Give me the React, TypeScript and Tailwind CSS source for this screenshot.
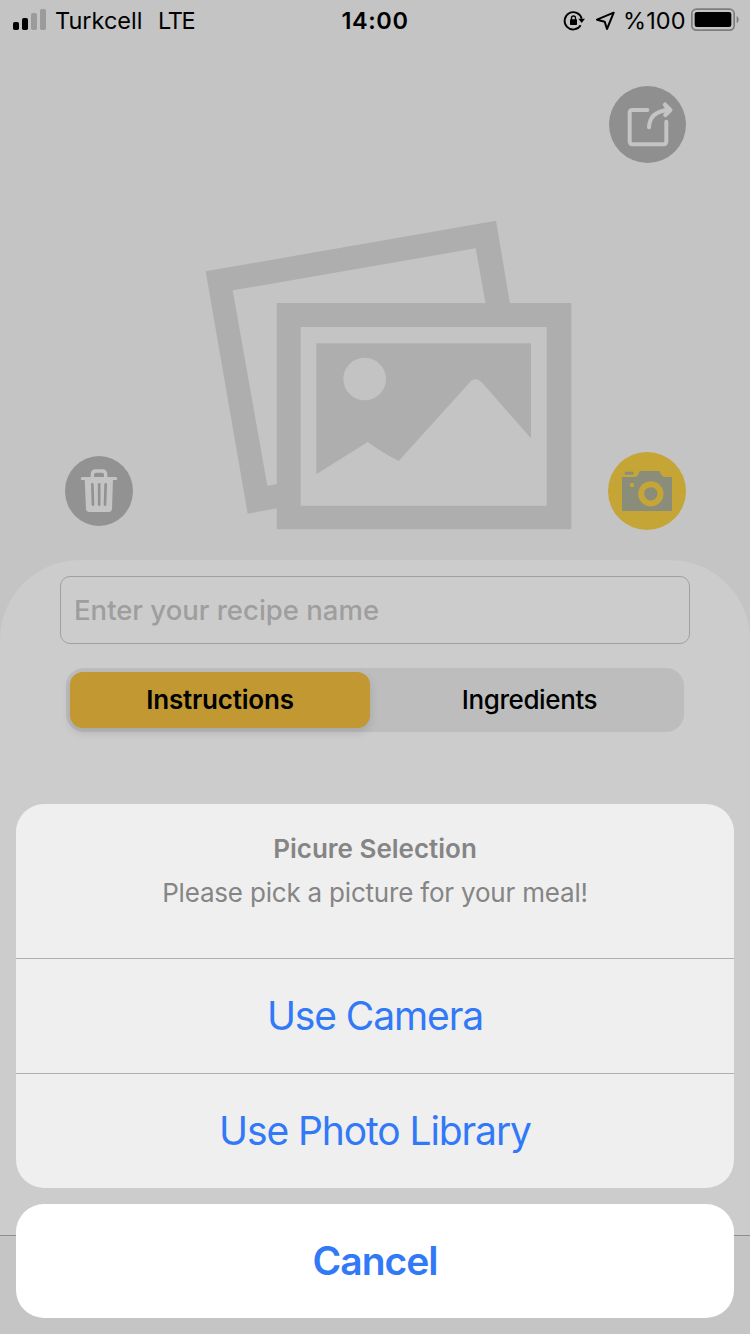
import type { ReactNode } from "react";

function SignalBars() {
  return (
    <svg className="mt-[9px] h-[21px] w-[33px]" viewBox="39 27 99 63">
      <rect x="39" y="66" width="18" height="24" rx="5" fill="#000" />
      <rect x="66" y="54" width="18" height="36" rx="5" fill="#000" />
      <rect x="93" y="39" width="18" height="51" rx="5" fill="#9b9b9b" />
      <rect x="120" y="27" width="18" height="63" rx="5" fill="#9b9b9b" />
    </svg>
  );
}

function RotationLock() {
  return (
    <svg className="mt-[10px] h-[21px] w-[22px]" viewBox="69 30 66 63">
      <path d="M122 76 A26 26 0 1 1 125 56" fill="none" stroke="#000" strokeWidth="5.500" />
      <path d="M115 56 H135 L125 69 Z" fill="#000" />
      <rect x="90" y="58" width="21" height="17" rx="2" fill="#000" />
      <path d="M94.500 60 V54 Q94.500 48 100.500 48 Q106.500 48 106.500 54 V60" fill="none" stroke="#000" strokeWidth="4" />
    </svg>
  );
}

function LocationArrow() {
  return (
    <svg className="mt-[11px] ml-[11px] h-[20px] w-[19px]" viewBox="168 33 57 60">
      <path
        d="M221 38 L171 59 L194 65 L201 87 Z"
        fill="none"
        stroke="#000"
        strokeWidth="6"
        strokeLinejoin="round"
      />
    </svg>
  );
}

function Battery() {
  return (
    <svg className="mt-[8px] ml-[6px] h-[23px] w-[48px]" viewBox="453 24 144 69">
      <rect x="455.500" y="27.500" width="127" height="63" rx="14" fill="none" stroke="#7d7d7d" strokeWidth="5" />
      <rect x="464" y="36" width="110" height="45" rx="7" fill="#000" />
      <path d="M590 47 Q596 51 596 58.500 Q596 66 590 70 Z" fill="#7d7d7d" />
    </svg>
  );
}

function StatusBar() {
  return (
    <header className="grid h-10 grid-cols-3 text-[23.5px] leading-[41px] text-black">
      <div className="flex pl-[13px]">
        <SignalBars />
        <span className="ml-[9px] w-[86px] tracking-[0px] whitespace-nowrap">Turkcell</span>
        <span className="ml-[17px] tracking-[-1.4px]">LTE</span>
      </div>
      <div className="text-center font-semibold tracking-[0.6px]">14:00</div>
      <div className="flex justify-end pr-[11px]">
        <RotationLock />
        <LocationArrow />
        <span className="ml-[8px] w-[62px] tracking-[0.1px] whitespace-nowrap">%100</span>
        <Battery />
      </div>
    </header>
  );
}

function PhotosPlaceholder() {
  return (
    <svg
      className="col-start-1 row-start-1 mt-[170px] ml-[190px] h-[340px] w-[400px]"
      viewBox="0 0 1200 1020"
      fill="#aeaeae"
    >
      <path d="M47 184 L918 32 L960 282 H887 L857 115 L128 241 L232 827 L262 822 V895 L173 911 Z" />
      <path fillRule="evenodd" d="M260 279 H1144 V958 H260 Z M332 351 V887 H1070 V351 Z" />
      <path d="M379 400 H1023 V685 L878 520 Q855 496 837 520 L626 753 Q580 730 533 696 L379 793 Z" />
      <circle cx="524" cy="507" r="64" fill="#c3c3c3" />
    </svg>
  );
}

function ShareIcon() {
  return (
    <svg className="h-[77px] w-[77px]" viewBox="27 33 231 231">
      <circle cx="142.500" cy="148.500" r="115.500" fill="#8f8f8f" />
      <g fill="none" stroke="#c4c4c4" strokeWidth="12" strokeLinecap="round" strokeLinejoin="round">
        <path d="M142 105 H98 Q89 105 89 114 V199 Q89 208 98 208 H190 Q199 208 199 199 V140" />
        <path d="M147 157 Q149 109 206 105" />
        <path d="M195 89 L211 105 L196 120" strokeWidth="13" />
      </g>
      <path d="M193 88 L214 105 L195 122 Z" fill="#c4c4c4" />
    </svg>
  );
}

function TrashIcon() {
  return (
    <svg className="h-[70px] w-[68px]" viewBox="45 48 204 210">
      <ellipse cx="147" cy="153" rx="102" ry="105" fill="#929292" />
      <path d="M104 116 H189 L186 207 Q185 216 176 216 H118 Q109 216 108 207 Z" fill="#c4c4c4" />
      <path d="M97 115.500 H197" stroke="#c4c4c4" strokeWidth="9" strokeLinecap="round" />
      <path
        d="M127 113 V104 Q127 93 138 93 H156 Q167 93 167 104 V113"
        fill="none"
        stroke="#c4c4c4"
        strokeWidth="10"
      />
      <g stroke="#929292" strokeWidth="8" strokeLinecap="round">
        <path d="M127 133 L129 194" />
        <path d="M147.500 133 V194" />
        <path d="M167 133 L165 194" />
      </g>
    </svg>
  );
}

function CameraIcon() {
  return (
    <svg className="h-[78px] w-[78px]" viewBox="39 36 234 234">
      <circle cx="156" cy="153" r="117" fill="#c5a535" />
      <path d="M81 111 H121 Q130 108 134 93 H193 Q199 108 207 111 H231 V213 H81 Z" fill="#8b8d7b" />
      <rect x="89" y="95" width="27" height="9" rx="4" fill="#8b8d7b" />
      <rect x="105" y="129" width="12" height="12" rx="2" fill="#c5a535" />
      <circle cx="167.500" cy="161.500" r="29" fill="none" stroke="#c5a535" strokeWidth="18" />
    </svg>
  );
}

function Hero() {
  return (
    <section className="grid h-[520px] grid-cols-1 grid-rows-1">
      <PhotosPlaceholder />
      <div className="col-start-1 row-start-1 flex flex-col justify-between pt-[46px] pr-16 pb-[30px] pl-[65px]">
        <button aria-label="Share" className="self-end">
          <ShareIcon />
        </button>
        <div className="flex items-center justify-between">
          <button aria-label="Delete">
            <TrashIcon />
          </button>
          <button aria-label="Choose picture">
            <CameraIcon />
          </button>
        </div>
      </div>
    </section>
  );
}

function RecipeForm() {
  return (
    <section className="h-[675px] rounded-t-[80px] bg-[#cccccc] pt-4">
      <div className="ml-[60px] flex h-[68px] w-[630px] items-center rounded-[10px] border border-[#a0a0a0] pl-[13px] text-[27.5px] leading-[42px] font-medium text-[#9e9e9e]">
        <span className="tracking-[0px]">Enter your recipe name</span>
      </div>
      <div className="mt-6 ml-[66px] flex h-16 w-[618px] rounded-[18px] bg-[#bdbdbd] p-1 text-[26px] leading-[55px] text-black">
        <div className="w-[300px] rounded-[13px] bg-[#c19832] text-center font-semibold tracking-[-0.2px] shadow-[0_4px_10px_rgba(0,0,0,0.13)]">
          Instructions
        </div>
        <div className="flex-1 pl-[9px] text-center font-medium tracking-[-0.4px]">Ingredients</div>
      </div>
    </section>
  );
}

function SheetAction({ children }: { children: ReactNode }) {
  return (
    <button className="block h-[115px] w-full border-t border-[#aeaeae] pb-px text-center text-[39px] leading-[47px] tracking-[-1.1px] text-[#3279f7]">
      {children}
    </button>
  );
}

function ActionSheet() {
  return (
    <div className="absolute inset-x-4 bottom-4 flex flex-col gap-4">
      <div className="overflow-hidden rounded-[28px] bg-[#efefef]">
        <div className="h-[154px] pt-[27px] text-center text-[26px] leading-[35px] text-[#858585]">
          <h2 className="font-semibold">Picure Selection</h2>
          <p className="mt-[9px] tracking-[-0.2px]">Please pick a picture for your meal!</p>
        </div>
        <SheetAction>Use Camera</SheetAction>
        <SheetAction>Use Photo Library</SheetAction>
      </div>
      <button className="h-[114px] rounded-[28px] bg-white pb-px text-center text-[39px] leading-[47px] font-semibold tracking-[-1px] text-[#3279f7]">
        Cancel
      </button>
    </div>
  );
}

export default function App() {
  return (
    <div className="relative h-[1334px] w-[750px] overflow-hidden bg-[#c4c4c4] font-[Inter,'Liberation_Sans',sans-serif]">
      <StatusBar />
      <Hero />
      <RecipeForm />
      <div className="h-[99px] border-t border-[#8f8f8f] bg-[#c5c5c5]" />
      <ActionSheet />
    </div>
  );
}
